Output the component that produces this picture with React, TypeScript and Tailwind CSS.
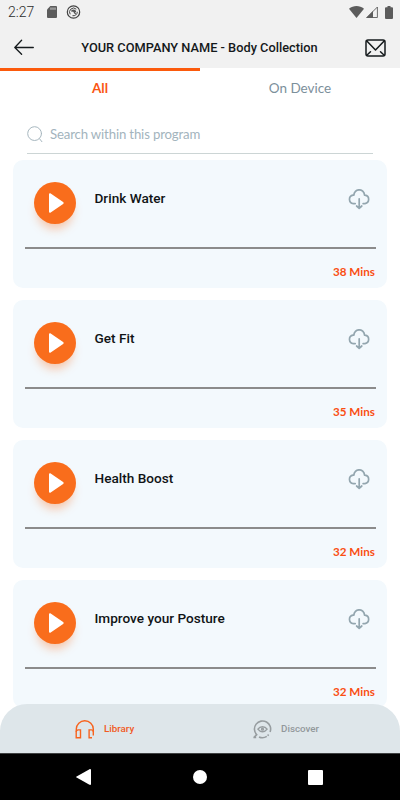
import { useState } from 'react';

const programs = [
  { title: 'Drink Water', mins: 38 },
  { title: 'Get Fit', mins: 35 },
  { title: 'Health Boost', mins: 32 },
  { title: 'Improve your Posture', mins: 32 },
];

function StatusBar() {
  return (
    <div className="flex h-6 items-center pl-2 pr-[7px] text-[#5c5c5c]">
      <span className="w-[39px] text-[14px] font-light leading-6 text-[#2c2c2c]">2:27</span>
      <svg width="10" height="12" viewBox="0 0 10 12" fill="currentColor">
        <path d="M3.3 0H9a1 1 0 0 1 1 1v10a1 1 0 0 1-1 1H1a1 1 0 0 1-1-1V3.5z" />
        <path d="M4 1.5v2.3M6 1.5v2.3M8 1.5v2.3" stroke="#f1f1f1" strokeWidth="0.8" />
      </svg>
      <svg className="ml-[9px]" width="15" height="14" viewBox="0 0 15 14" fill="none" stroke="#444">
        <circle cx="7.5" cy="7" r="6.2" strokeWidth="1.2" />
        <path d="M4.2 9.300A4 4 0 0 1 10.300 4.200M11.300 6.800A4 4 0 0 1 6.500 10.700" strokeWidth="1" />
        <path d="M5 6.500C5 4 9.800 3.300 10.300 7L9 7.200l1.500 2L8.400 8.700 7.300 6.800z" fill="#555" stroke="none" />
      </svg>
      <div className="ml-auto flex items-center">
        <svg width="15" height="12" viewBox="0 0 15 12" fill="currentColor">
          <path d="M0 2.7C4.3-.8 10.7-.8 15 2.7L7.5 12z" />
        </svg>
        <svg className="ml-0.5" width="12" height="12" viewBox="0 0 12 12" fill="currentColor">
          <path d="M11.4 1v10.5H.9z" fill="none" stroke="currentColor" strokeWidth="0.9" />
          <path d="M7 5v7H0z" />
        </svg>
        <svg className="ml-[7px]" width="8" height="13" viewBox="0 0 8 13" fill="currentColor">
          <path d="M2.5 0h3v1.3H7a1 1 0 0 1 1 1V12a1 1 0 0 1-1 1H1a1 1 0 0 1-1-1V2.3a1 1 0 0 1 1-1h1.5z" />
        </svg>
      </div>
    </div>
  );
}

function BackIcon() {
  return (
    <svg className="-mt-[3px]" width="20" height="16" viewBox="0 0 20 16" fill="none" stroke="#151a1c" strokeWidth="1.3" strokeLinecap="round" strokeLinejoin="round">
      <path d="M19.3 8.5H.9M7.6 1.2.8 8.5 7.600 15.200" />
    </svg>
  );
}

function MailIcon() {
  return (
    <svg className="-mt-px" width="21" height="18" viewBox="0 0 21 18" fill="none" stroke="#151a1c" strokeWidth="1.5" strokeLinecap="round" strokeLinejoin="round">
      <rect x="1" y="0.9" width="19" height="16.2" rx="2" />
      <path d="M1.6 1.8 10.5 11l8.900-9.200M2.300 15.800l3.200-3M18.700 15.800l-3.200-3" />
    </svg>
  );
}

function SearchIcon() {
  return (
    <svg width="16" height="17" viewBox="0 0 16 17" fill="none" stroke="#a7b7bf" strokeWidth="1" strokeLinecap="round">
      <circle cx="7.6" cy="7.6" r="6.9" />
      <path d="m12.500 12.700 2.400 3" />
    </svg>
  );
}

function CloudDownloadIcon() {
  return (
    <svg width="22" height="21" viewBox="0 0 22 21" fill="none" stroke="#93a6af" strokeWidth="1.7" strokeLinecap="round" strokeLinejoin="round">
      <path d="M7.2 14.600H5.300A4.300 4.300 0 0 1 5 6.100h.9a5.300 5.300 0 0 1 10.600 0h.5a4.300 4.300 0 0 1 0 8.500h-1.900" />
      <path d="M11.200 9.800v9.200M8.600 17l2.600 2.300L13.800 17" />
    </svg>
  );
}

function HeadphonesIcon() {
  return (
    <svg width="20" height="19" viewBox="0 0 20 19" fill="none" stroke="#f7631e" strokeWidth="1.4">
      <path d="M1.3 12V9a8.500 8.2 0 0 1 17 0v6.500" />
      <path d="M5.5 9.900H3.200a2 2 0 0 0-2 2v5.800h4.300zM17 17.700h-2.900V9.900h2.300a2 2 0 0 1 2 2" />
    </svg>
  );
}

function DiscoverIcon() {
  return (
    <svg width="19" height="19" viewBox="0 0 19 19" fill="none" stroke="#979da0" strokeWidth="1.6">
      <path d="M.4 17.500h2.800M1 17.400l2.700-2.700A8.100 8.100 0 1 1 17.100 12M15.600 14.500l-.9 1.200M13.800 16.400A8.300 8.300 0 0 1 6 16.900" />
      <path d="M4.900 9.200c2.300-3.300 6.900-3.300 9.200 0-2.300 3.300-6.900 3.300-9.200 0z" strokeWidth="1.4" />
      <circle cx="9.500" cy="9.200" r="0.900" strokeWidth="1.400" />
    </svg>
  );
}

function ProgramCard({ title, mins }: { title: string; mins: number }) {
  return (
    <div className="h-32 shrink-0 rounded-[10px] bg-[#f3f9fd] px-[11px]">
      <div className="flex h-[87px] items-start pl-[10px] pr-[6px] pt-[22px]">
        <button className="flex size-[42px] items-center justify-center rounded-full bg-[#f96d1c] shadow-[0_8px_10px_-3px_rgba(249,109,28,0.36)]">
          <svg className="ml-[3px]" width="15" height="20" viewBox="0 0 15 20" fill="#fff">
            <path d="M0 1.2C0 .1 1 0 1.7.5l12.400 8.600c.8.5.8 1.300 0 1.800L1.700 19.500C1 20 0 19.800 0 18.800z" />
          </svg>
        </button>
        <h2 className="ml-[18.5px] mt-[6px] text-[13.6px] font-medium leading-5 text-[#101416]">{title}</h2>
        <button className="ml-auto mt-[7px]">
          <CloudDownloadIcon />
        </button>
      </div>
      <div className="ml-[0.5px] h-[2px] bg-[#8b8b8b]" />
      <p className="mt-[14px] pr-px text-right font-[Lato] text-[11.7px] font-bold leading-4 text-[#fa4f13]">{mins} Mins</p>
    </div>
  );
}

export default function App() {
  const [tab, setTab] = useState<'all' | 'device'>('all');

  return (
    <div className="flex h-[800px] w-[400px] flex-col overflow-hidden bg-white font-[Roboto,sans-serif]">
      <header className="h-[68px] shrink-0 bg-[#f1f1f1]">
        <StatusBar />
        <div className="flex h-[46px] items-center justify-between px-[14px] pt-[2px]">
          <BackIcon />
          <h1 className="text-[12.8px] font-medium text-[#15191b]">YOUR COMPANY NAME - Body Collection</h1>
          <MailIcon />
        </div>
      </header>

      <div className="flex h-10 shrink-0 font-[Lato] text-[13.5px]">
        <button
          onClick={() => setTab('all')}
          className={`flex-1 border-t-[3px] pb-[3px] ${tab === 'all' ? 'border-[#fb5a0c] font-bold text-[#fa5514]' : 'border-transparent text-[#7c909b]'}`}
        >
          All
        </button>
        <button
          onClick={() => setTab('device')}
          className={`flex-1 border-t-[3px] pb-[3px] ${tab === 'device' ? 'border-[#fb5a0c] font-bold text-[#fa5514]' : 'border-transparent text-[#7c909b]'}`}
        >
          On Device
        </button>
      </div>

      <div className="mx-[27px] mt-2 flex h-[38px] shrink-0 items-center gap-[7px] border-b border-[#ccd5d5]">
        <SearchIcon />
        <input
          type="text"
          placeholder="Search within this program"
          className="min-w-0 flex-1 bg-transparent font-[Lato] text-[13.2px] tracking-[-0.15px] outline-none placeholder:text-[#a3b4bd]"
        />
      </div>

      <main className="mx-[13px] mt-[6px] flex min-h-0 flex-1 flex-col gap-3 overflow-hidden">
        {programs.map((program) => (
          <ProgramCard key={program.title} title={program.title} mins={program.mins} />
        ))}
      </main>

      <nav className="relative -mt-[49px] flex h-[49px] shrink-0 rounded-t-[27px] bg-[#dee6ea] text-[9.8px] font-medium">
        <button className="flex w-[252.5px] items-center gap-[9px] pl-[75px] pt-px text-[#f15a24]">
          <HeadphonesIcon />
          Library
        </button>
        <button className="flex items-center gap-[9.5px] pt-px text-[#92989b]">
          <DiscoverIcon />
          Discover
        </button>
      </nav>

      <div className="flex h-[47px] shrink-0 items-center border-t border-[#3f4142] bg-black pl-[76px]">
        <svg width="15" height="16" viewBox="0 0 15 16" fill="#fff">
          <path d="M13.5.2c.8-.4 1.5 0 1.5.8v14c0 .8-.7 1.2-1.500.8L.6 8.600c-.7-.4-.7-.8 0-1.200z" />
        </svg>
        <span className="ml-[102px] size-[14px] rounded-full bg-white" />
        <span className="ml-[101px] size-[15px] rounded-[1px] bg-white" />
      </div>
    </div>
  );
}
